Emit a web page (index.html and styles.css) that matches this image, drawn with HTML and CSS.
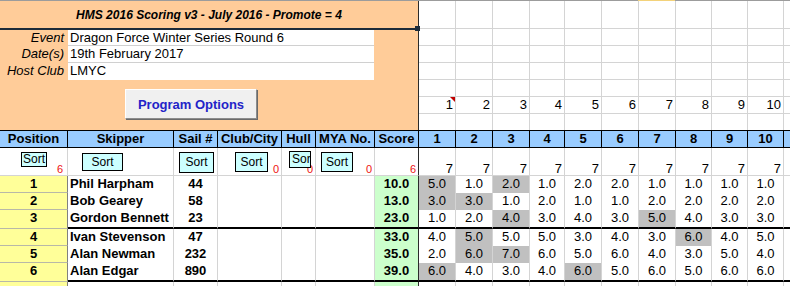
FILE: index.html
```html
<!DOCTYPE html>
<html>
<head>
<meta charset="utf-8">
<title>HMS 2016 Scoring</title>
<link rel="stylesheet" href="styles.css">
</head>
<body>
<div class="sheet">
  <div class="ruler"></div>
  <div class="top">
    <div class="panel">
      <div class="title">HMS 2016 Scoring v3 - July 2016 - Promote = 4</div>
      <div class="field f1"><span class="lbl">Event</span><span class="val">Dragon Force Winter Series Round 6</span></div>
      <div class="field f2"><span class="lbl">Date(s)</span><span class="val">19th February 2017</span></div>
      <div class="field f3"><span class="lbl">Host Club</span><span class="val">LMYC</span></div>
      <div class="btnrow"><button class="prog">Program Options</button></div>
      <span class="handle"></span>
    </div>
    <div class="tg">
      <i></i><i></i><i></i><i></i><i></i><i></i><i></i><i></i><i></i><i></i><i></i>
      <i></i><i></i><i></i><i></i><i></i><i></i><i></i><i></i><i></i><i></i><i></i>
      <i></i><i></i><i></i><i></i><i></i><i></i><i></i><i></i><i></i><i></i><i></i>
      <i></i><i></i><i></i><i></i><i></i><i></i><i></i><i></i><i></i><i></i><i></i>
      <i></i><i></i><i></i><i></i><i></i><i></i><i></i><i></i><i></i><i></i><i></i>
      <i class="cm">1</i><i>2</i><i>3</i><i>4</i><i>5</i><i>6</i><i>7</i><i>8</i><i>9</i><i>10</i><i></i>
      <i></i><i></i><i></i><i></i><i></i><i></i><i></i><i></i><i></i><i></i><i></i>
    </div>
  </div>

  <div class="row head">
    <div>Position</div><div>Skipper</div><div>Sail #</div><div>Club/City</div><div>Hull</div><div>MYA No.</div><div>Score</div>
    <div>1</div><div>2</div><div>3</div><div>4</div><div>5</div><div>6</div><div>7</div><div>8</div><div>9</div><div>10</div><div></div>
  </div>

  <div class="row sorts">
    <div><span class="sb p">Sort</span><span class="n red rp">6</span></div>
    <div><span class="sb s">Sort</span></div>
    <div><span class="sb sa">Sort</span></div>
    <div><span class="n red">0</span><span class="sb c">Sort</span></div>
    <div><span class="n red">0</span><span class="sb h">Sort</span></div>
    <div><span class="sb m">Sort</span><span class="n red">0</span></div>
    <div class="scb"><span class="n red">6</span></div>
    <div><span class="n">7</span></div><div><span class="n">7</span></div><div><span class="n">7</span></div><div><span class="n">7</span></div><div><span class="n">7</span></div>
    <div><span class="n">7</span></div><div><span class="n">7</span></div><div><span class="n">7</span></div><div><span class="n">7</span></div><div><span class="n">7</span></div>
    <div class="end"></div>
  </div>

  <div class="row data">
    <div class="pos">1</div><div class="nm">Phil Harpham</div><div class="sn">44</div><div></div><div></div><div></div><div class="sc">10.0</div>
    <div class="r g">5.0</div><div class="r">1.0</div><div class="r g">2.0</div><div class="r">1.0</div><div class="r">2.0</div><div class="r">2.0</div><div class="r">1.0</div><div class="r">1.0</div><div class="r">1.0</div><div class="r">1.0</div><div class="end"></div>
  </div>
  <div class="row data">
    <div class="pos">2</div><div class="nm">Bob Gearey</div><div class="sn">58</div><div></div><div></div><div></div><div class="sc">13.0</div>
    <div class="r g">3.0</div><div class="r g">3.0</div><div class="r">1.0</div><div class="r">2.0</div><div class="r">1.0</div><div class="r">1.0</div><div class="r">2.0</div><div class="r">2.0</div><div class="r">2.0</div><div class="r">2.0</div><div class="end"></div>
  </div>
  <div class="row data sep">
    <div class="pos">3</div><div class="nm">Gordon Bennett</div><div class="sn">23</div><div></div><div></div><div></div><div class="sc">23.0</div>
    <div class="r">1.0</div><div class="r">2.0</div><div class="r g">4.0</div><div class="r">3.0</div><div class="r">4.0</div><div class="r">3.0</div><div class="r g">5.0</div><div class="r">4.0</div><div class="r">3.0</div><div class="r">3.0</div><div class="end"></div>
  </div>
  <div class="row data">
    <div class="pos">4</div><div class="nm">Ivan Stevenson</div><div class="sn">47</div><div></div><div></div><div></div><div class="sc">33.0</div>
    <div class="r">4.0</div><div class="r g">5.0</div><div class="r">5.0</div><div class="r">5.0</div><div class="r">3.0</div><div class="r">4.0</div><div class="r">3.0</div><div class="r g">6.0</div><div class="r">4.0</div><div class="r">5.0</div><div class="end"></div>
  </div>
  <div class="row data">
    <div class="pos">5</div><div class="nm">Alan Newman</div><div class="sn">232</div><div></div><div></div><div></div><div class="sc">35.0</div>
    <div class="r">2.0</div><div class="r g">6.0</div><div class="r g">7.0</div><div class="r">6.0</div><div class="r">5.0</div><div class="r">6.0</div><div class="r">4.0</div><div class="r">3.0</div><div class="r">5.0</div><div class="r">4.0</div><div class="end"></div>
  </div>
  <div class="row data sep">
    <div class="pos">6</div><div class="nm">Alan Edgar</div><div class="sn">890</div><div></div><div></div><div></div><div class="sc">39.0</div>
    <div class="r g">6.0</div><div class="r">4.0</div><div class="r">3.0</div><div class="r">4.0</div><div class="r g">6.0</div><div class="r">5.0</div><div class="r">6.0</div><div class="r">5.0</div><div class="r">6.0</div><div class="r">6.0</div><div class="end"></div>
  </div>
  <div class="row data tail">
    <div class="pos"></div><div></div><div></div><div></div><div></div><div></div><div class="sc"></div>
    <div></div><div></div><div></div><div></div><div></div><div></div><div></div><div></div><div></div><div></div><div class="end"></div>
  </div>
</div>
</body>
</html>
```

FILE: styles.css
```css
body {
  margin: 0;
  background: #ffffff;
  font-family: "Liberation Sans", Arial, sans-serif;
  font-size: 13px;
  color: #000;
}

.sheet {
  --cols: 68px 106px 44px 64px 34px 59px 44px 37px 37px 37px 35px 37px 37px 37px 36px 36px 36px 6px;
  width: 790px;
  height: 286px;
  overflow: hidden;
}

.ruler {
  height: 1px;
  background: linear-gradient(to right, #9c9c9c 638px, #f3d27a 638px, #f3d27a 675px, #9c9c9c 675px);
}

.top {
  display: flex;
  height: 129px;
}

/* orange header panel */
.panel {
  position: relative;
  box-sizing: border-box;
  width: 419px;
  flex: none;
  background: #ffcc99;
  border-right: 1px solid #2b2b2b;
  display: flex;
  flex-direction: column;
}

.title {
  height: 27px;
  border-bottom: 2px solid #1c2b3a;
  display: flex;
  align-items: center;
  justify-content: center;
  font-size: 12px;
  font-weight: bold;
  font-style: italic;
}

.field {
  display: grid;
  grid-template-columns: 68px 306px;
  box-sizing: border-box;
}
.field.f1 { height: 16px; }
.field.f2 { height: 17px; }
.field.f3 { height: 17px; }

.lbl {
  text-align: right;
  padding-right: 4px;
  font-style: italic;
  line-height: 15px;
}

.val {
  box-sizing: border-box;
  background: #ffffff;
  padding-left: 2px;
  line-height: 15px;
  border-bottom: 1px solid #d0d0d0;
  white-space: nowrap;
}
.f3 .val { border-bottom: none; }

.btnrow {
  flex: 1;
  padding: 9px 0 0 125px;
}

.prog {
  box-sizing: border-box;
  width: 132px;
  height: 30px;
  margin: 0;
  padding: 0;
  background: #f0f0f0;
  border: 1px solid;
  border-color: #ffffff #8c8c8c #8c8c8c #ffffff;
  box-shadow: 1px 1px 0 #6a6a6a;
  font-family: "Liberation Sans", Arial, sans-serif;
  font-size: 13px;
  font-weight: bold;
  color: #2323c8;
}

.handle {
  position: absolute;
  left: 415px;
  top: 25px;
  width: 5px;
  height: 5px;
  background: #1c2b3a;
}

/* empty sheet grid on the right */
.tg {
  flex: 1;
  display: grid;
  grid-template-columns: 37px 37px 37px 35px 37px 37px 37px 36px 36px 36px 6px;
  grid-template-rows: 28px 17px 17px 17px 17px 17px 16px;
}
.tg > i {
  box-sizing: border-box;
  border-right: 1px solid #d4d4d4;
  border-bottom: 1px solid #d4d4d4;
  font-style: normal;
  text-align: right;
  padding-right: 2px;
  line-height: 16px;
}
.tg > i:nth-child(11n) { border-right: none; }
.tg > i:nth-last-child(-n+11) { border-bottom: none; }

.tg > i.cm { position: relative; }
.tg > i.cm::after {
  content: "";
  position: absolute;
  top: 0;
  right: 0;
  border-top: 5px solid #c00000;
  border-left: 5px solid transparent;
}

/* table rows */
.row {
  display: grid;
  grid-template-columns: var(--cols);
}

.head {
  box-sizing: border-box;
  height: 18px;
  border-top: 1px solid #000;
  border-bottom: 1px solid #000;
  background: #99ccff;
  font-weight: bold;
  line-height: 15px;
  text-align: center;
}
.head > div {
  border-right: 1px solid #000;
  white-space: nowrap;
}
.head > div:last-child { border-right: none; }

.sorts { height: 28px; }
.sorts > div {
  box-sizing: border-box;
  border-right: 1px solid #d4d4d4;
  border-bottom: 1px solid #d4d4d4;
  display: grid;
  overflow: hidden;
}
.sorts > div > * { grid-area: 1 / 1; }
.sorts > .scb { border-right-color: #2b2b2b; }
.sorts > .end { border-right: none; }

.n {
  justify-self: end;
  align-self: end;
  padding-right: 2px;
  line-height: 13px;
}
.red {
  color: #ee1111;
  font-size: 11px;
  line-height: 12px;
}
.rp { padding-right: 4px; }

.sb {
  justify-self: start;
  align-self: start;
  box-sizing: border-box;
  background: #ccffff;
  border: 1px solid #000;
  font-size: 12px;
  text-align: center;
  overflow: hidden;
  white-space: nowrap;
}
.sb.p  { margin: 4px 0 0 21px; width: 26px; height: 15px; line-height: 13px; }
.sb.s  { margin: 5px 0 0 14px; width: 41px; height: 18px; line-height: 16px; }
.sb.sa { margin: 4px 0 0 5px;  width: 35px; height: 21px; line-height: 19px; }
.sb.c  { margin: 4px 0 0 17px; width: 33px; height: 20px; line-height: 18px; }
.sb.h  { margin: 3px 0 0 7px;  width: 22px; height: 17px; line-height: 14px; text-align: left; padding-left: 2px; }
.sb.m  { margin: 4px 0 0 5px;  width: 32px; height: 20px; line-height: 18px; }

.data { height: 17px; }
.data.sep { height: 19px; }
.data.tail { height: 12px; }
.data > div {
  box-sizing: border-box;
  border-right: 1px solid #d4d4d4;
  line-height: 16px;
  white-space: nowrap;
  overflow: hidden;
}
.data > .end { border-right: none; }
.data > .pos {
  background: #ffff99;
  border-right-color: #808080;
  border-bottom: 1px solid #b8b8a8;
  font-weight: bold;
  text-align: center;
}
.data.sep > div:not(.pos) { border-bottom: 2px solid #000; }
.data > .nm { font-weight: bold; padding-left: 2px; }
.data > .sn { font-weight: bold; text-align: center; }
.data > .sc {
  background: #ccffcc;
  border-right-color: #2b2b2b;
  font-weight: bold;
  text-align: center;
}
.data > .r { text-align: center; }
.data > .g { background: #c0c0c0; }
```
